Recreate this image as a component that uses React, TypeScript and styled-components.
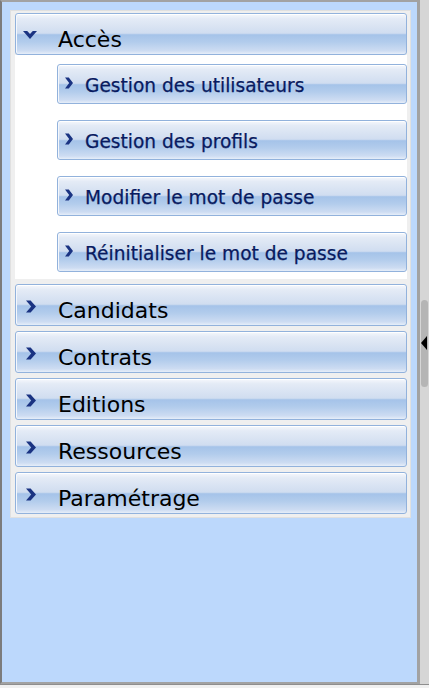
import React from "react";
import styled, { createGlobalStyle } from "styled-components";

const Global = createGlobalStyle`
  html, body { margin: 0; padding: 0; background: #f0f0f0; }
  body { font-family: "DejaVu Sans", Verdana, sans-serif; }
  #root { width: 429px; height: 688px; }
`;

const Layout = styled.div`
  display: flex;
  width: 429px;
  height: 684px;
  border-bottom: 1px solid #8e8e8e;
`;

const Panel = styled.div`
  box-sizing: border-box;
  width: 420px;
  height: 100%;
  background: #bcd8fc;
  border: 2px solid #a2a2a2;
  border-left-color: #7c7c7c;
  border-right-width: 3px;
  padding: 8px 6px 0 8px;
`;

const Container = styled.div`
  box-sizing: border-box;
  background: #efefef;
  border: 1px solid #e0e0e0;
  padding: 2px 3px 3px 4px;
  display: flex;
  flex-direction: column;
  gap: 5px;
`;

const gloss = `
  background: linear-gradient(
    to bottom,
    #f6f8fc 0%,
    #e4ebf6 12%,
    #d0ddf0 48%,
    #a5c3e9 52%,
    #b2ccec 70%,
    #cddcf2 92%,
    #e6eef9 100%
  );
  border: 1px solid #92b2dc;
  border-radius: 3px;
  box-shadow: inset 0 1px 0 #ffffff, inset 1px 0 0 #f4f7fc;
`;

const Header = styled.div`
  box-sizing: border-box;
  position: relative;
  height: 42px;
  ${gloss}
  display: flex;
  align-items: flex-start;
  padding: 13px 0 0 42px;
  font-size: 22px;
  line-height: 26px;
  color: #000;
`;

const HeaderIcon = styled.svg<{ $open?: boolean }>`
  position: absolute;
  display: block;
  left: ${(p) => (p.$open ? 7 : 10)}px;
  top: ${(p) => (p.$open ? 17 : 15)}px;
`;

const Group = styled.div`
  display: flex;
  flex-direction: column;
`;

const Content = styled.div`
  background: #ffffff;
  padding: 9px 0 7px 42px;
  display: flex;
  flex-direction: column;
  gap: 16px;
`;

const SubItem = styled.div`
  box-sizing: border-box;
  position: relative;
  height: 40px;
  ${gloss}
  padding: 10px 0 0 27px;
  font-size: 18.6px;
  line-height: 22px;
  color: #081a60;
  -webkit-text-stroke: 0.25px #081a60;
  white-space: nowrap;
`;

const SubIcon = styled.svg`
  position: absolute;
  display: block;
  left: 7px;
  top: 12px;
`;

const Splitter = styled.div`
  position: relative;
  width: 9px;
  height: 100%;
  background: #d6d6d6;
`;

const Grip = styled.div`
  position: absolute;
  left: 1px;
  top: 300px;
  width: 7px;
  height: 87px;
  background: #b5b5b5;
  border-radius: 4px;
`;

const Arrow = styled.div`
  position: absolute;
  left: 1px;
  top: 336px;
  width: 0;
  height: 0;
  border-top: 7px solid transparent;
  border-bottom: 7px solid transparent;
  border-right: 6px solid #000;
`;

const CHEV = "#1a3382";

const RightChevron = () => (
  <HeaderIcon width="10" height="13" viewBox="0 0 10 13">
    <polygon points="0,0.5 4.6,0.5 10,6.5 4.6,12.5 0,12.5 5.2,6.5" fill={CHEV} />
  </HeaderIcon>
);

const DownChevron = () => (
  <HeaderIcon $open width="14" height="8" viewBox="0 0 14 8">
    <polygon points="0,0 4.2,0 7,3 9.8,0 14,0 7,8" fill={CHEV} />
  </HeaderIcon>
);

const SubChevron = () => (
  <SubIcon width="8" height="12" viewBox="0 0 8 12">
    <polygon points="0,0.5 3.8,0.5 8,6 3.8,11.5 0,11.5 4.2,6" fill={CHEV} />
  </SubIcon>
);

const subs = [
  "Gestion des utilisateurs",
  "Gestion des profils",
  "Modifier le mot de passe",
  "Réinitialiser le mot de passe",
];

const sections = ["Candidats", "Contrats", "Editions", "Ressources", "Paramétrage"];

export default function App() {
  return (
    <>
      <Global />
      <Layout>
        <Panel>
          <Container>
            <Group>
              <Header>
                <DownChevron />
                Accès
              </Header>
              <Content>
                {subs.map((s) => (
                  <SubItem key={s}>
                    <SubChevron />
                    {s}
                  </SubItem>
                ))}
              </Content>
            </Group>
            {sections.map((s) => (
              <Header key={s}>
                <RightChevron />
                {s}
              </Header>
            ))}
          </Container>
        </Panel>
        <Splitter>
          <Grip />
          <Arrow />
        </Splitter>
      </Layout>
    </>
  );
}
